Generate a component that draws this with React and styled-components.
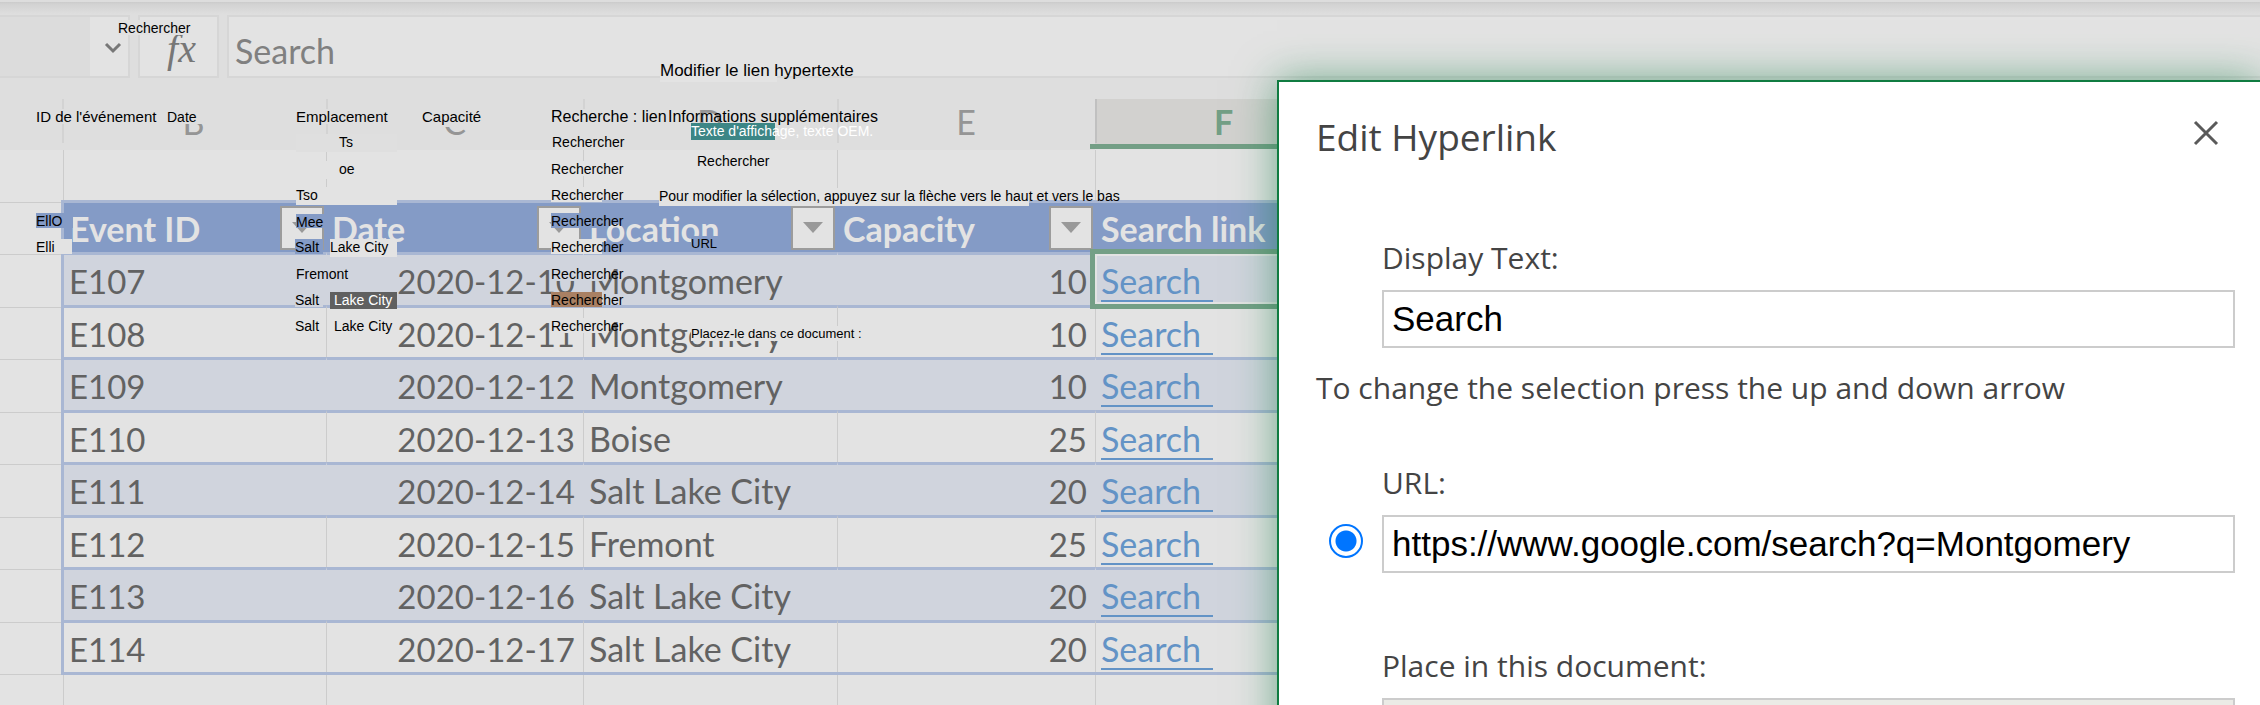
import React from "react";
import styled, { createGlobalStyle, css } from "styled-components";

const SHEET = "#e3e3e3";
const CHROME = "#dedede";
const BAND = "#d0d4dd";
const BLUE = "#849bc6";
const EDGE = "#a9b7d3";
const LINE = "#cccccc";
const GREEN = "#749f86";

const GlobalStyle = createGlobalStyle`
  * { box-sizing: border-box; }
  body { margin: 0; background: ${SHEET}; }
`;

const Page = styled.div`
  position: relative;
  height: 100vh;
  overflow: hidden;
  background: ${SHEET};
  color: #626262;
  font: 34px/40px Lato, Carlito, sans-serif;
`;

/* ---------- formula bar ---------- */

const TopStrip = styled.div`
  height: 15px;
  border-top: 2px solid #dddddd;
  background: linear-gradient(#cbcbcb, #d2d2d2 2px, #dedede 12px);
`;

const FormulaBar = styled.div`
  display: flex;
  gap: 8px;
  height: 84px;
  padding-bottom: 21px;
  background: ${CHROME};
`;

const BarBox = styled.div`
  display: flex;
  align-items: center;
  border: 2px solid #d6d6d6;
  background: ${SHEET};
`;

const NameBox = styled(BarBox)`
  width: 130px;
  border-left: 0;
`;

const NameValue = styled.div`
  width: 90px;
  align-self: stretch;
  background: #dcdcdc;
`;

const NameToggle = styled.button`
  flex: 1;
  display: flex;
  justify-content: flex-end;
  padding: 2px 6px 0 0;
  border: 0;
  background: none;
`;

const FxButton = styled.button`
  width: 81px;
  padding: 4px 0 0 6px;
  border: 2px solid #d6d6d6;
  background: ${SHEET};
  color: #777777;
  font: italic 40px/40px "Liberation Serif", serif;
`;

const FormulaInput = styled.input`
  flex: 1;
  min-width: 0;
  padding: 8px 6px 0;
  border: 2px solid #d6d6d6;
  border-right: 0;
  background: ${SHEET};
  color: #808080;
  font: inherit;
`;

/* ---------- grid ---------- */

const Grid = styled.table`
  width: 100%;
  table-layout: fixed;
  border-collapse: separate;
  border-spacing: 0;
`;

const Col = styled.col`
  width: ${(p) => p.$w}px;
`;

const Letter = styled.th`
  position: relative;
  height: 51px;
  padding: 0 0 ${(p) => (p.$active ? 4 : 6)}px;
  background: ${(p) => (p.$active ? "#d2d1cf" : CHROME)};
  color: ${(p) => (p.$active ? GREEN : "#959595")};
  font-weight: ${(p) => (p.$active ? 700 : 400)};
  background-image: linear-gradient(
    ${(p) => (p.$active ? "#c0c0c0" : "#d3d3d3")} 44px,
    transparent 44px
  );
  background-size: 2px 100%;
  background-position: ${(p) => (p.$first ? 1 : 0)}px 0;
  background-repeat: no-repeat;
  ${(p) =>
    p.$active &&
    css`
      border-bottom: 2px solid ${SHEET};
      &::after {
        content: "";
        position: absolute;
        left: -5px;
        right: 0;
        bottom: -1px;
        height: 5px;
        background: ${GREEN};
      }
    `}
`;

const Corner = styled.th`
  padding: 0;
  background: ${CHROME};
`;

const Row = styled.tr`
  height: ${(p) => p.$h}px;
`;

const Gutter = styled.td`
  padding: 0;
  background: linear-gradient(${LINE}, ${LINE}) 0 2px / 100% 1px no-repeat;
`;

const Blank = styled.td`
  padding: 0;
  background: linear-gradient(${LINE}, ${LINE}) ${(p) => (p.$first ? 2 : 0)}px 0 /
    1px 100% no-repeat;
  border-top: ${(p) => (p.$edge ? `3px solid ${EDGE}` : 0)};
`;

const HeadCell = styled.th`
  padding: 0 2px 0 6px;
  border-top: 3px solid ${EDGE};
  border-left: ${(p) => (p.$first ? `3px solid ${EDGE}` : 0)};
  background: ${BLUE};
  color: ${SHEET};
  font-weight: 700;
  text-align: left;
`;

const HeadInner = styled.div`
  display: flex;
  align-items: center;
  justify-content: space-between;
  height: 46px;
  white-space: nowrap;
`;

const HeadText = styled.span`
  padding-top: 3px;
`;

const FilterButton = styled.button`
  display: flex;
  align-items: center;
  justify-content: center;
  width: 44px;
  height: 44px;
  padding: 0;
  border: 2px solid #9c9c9c;
  background: ${SHEET};
`;

const Cell = styled.td`
  position: ${(p) => (p.$active ? "relative" : "static")};
  padding: 6px 8px 0 5px;
  border-top: 3px solid ${EDGE};
  border-left: 1px solid ${(p) => (p.$band ? BAND : LINE)};
  background: ${(p) => (p.$band ? BAND : SHEET)};
  text-align: ${(p) => (p.$right ? "right" : "left")};
  vertical-align: top;
  font-size: ${(p) => (p.$digits ? 33 : 34)}px;
  line-height: 40px;
  white-space: nowrap;
  ${(p) =>
    p.$first &&
    css`
      border-left: 3px solid ${EDGE};
    `}
`;

const CellLink = styled.a`
  display: inline-block;
  height: 41px;
  padding-right: 12px;
  border-bottom: 2px solid #6393c6;
  color: #6393c6;
  text-decoration: none;
  vertical-align: top;
`;

const Selection = styled.span`
  position: absolute;
  top: -6px;
  bottom: -4px;
  left: -6px;
  right: 0;
  border: 5px solid ${GREEN};
  box-shadow: inset 0 0 0 2px ${SHEET};
  pointer-events: none;
`;

/* ---------- floating translated labels ---------- */

const Tag = styled.span`
  position: absolute;
  left: ${(p) => p.$x}px;
  top: ${(p) => p.$y}px;
  width: ${(p) => p.$w}px;
  height: ${(p) => p.$h}px;
  padding-left: ${(p) => p.$pad || 0}px;
  background: ${(p) => p.$bg};
  color: ${(p) => p.$color || "#000000"};
  font: ${(p) => p.$size || 14}px/16px "Liberation Sans", sans-serif;
  white-space: nowrap;
`;

/* ---------- dialog ---------- */

const Dialog = styled.section`
  position: absolute;
  top: 80px;
  left: 1277px;
  right: 0;
  min-height: 100vh;
  padding: 29px 25px 0 37px;
  border: solid #107c41;
  border-width: 2px 0 0 2px;
  background: #ffffff;
  box-shadow: 0 0 40px rgba(16, 124, 65, 0.55);
  color: #444444;
  font: 30px/40px "Open Sans", "Noto Sans", sans-serif;
`;

const DialogHeader = styled.header`
  display: flex;
  justify-content: space-between;
  align-items: flex-start;
  margin-bottom: 75px;
`;

const Title = styled.h1`
  margin: 0;
  font-size: 37px;
  font-weight: 400;
  line-height: 52px;
`;

const CloseButton = styled.button`
  display: flex;
  padding: 8px 15px;
  border: 0;
  background: none;
`;

const Field = styled.div`
  display: grid;
  grid-template-columns: 66px 1fr;
  row-gap: 12px;
  align-items: center;
  margin-bottom: ${(p) => p.$after}px;
`;

const FieldLabel = styled.label`
  grid-column: 2;
`;

const TextInput = styled.input`
  grid-column: 2;
  width: 100%;
  height: 58px;
  padding: 0 8px;
  border: 2px solid #cccccc;
  background: #ffffff;
  color: #000000;
  font: 35px "Liberation Sans", sans-serif;
`;

const PlaceList = styled.select`
  grid-column: 2;
  width: 100%;
  height: 200px;
  border: 2px solid #cccccc;
  border-radius: 0;
  background: #ebebe6;
`;

const Radio = styled.input`
  appearance: none;
  width: 34px;
  height: 34px;
  margin: 0 0 6px 13px;
  border: 2px solid #0075ff;
  border-radius: 50%;
  background: radial-gradient(circle, #0075ff 10px, #ffffff 11px);
`;

const Hint = styled.p`
  margin: 0 0 55px;
  white-space: nowrap;
`;

const EVENTS = [
  ["E107", "2020-12-10", "Montgomery", 10],
  ["E108", "2020-12-11", "Montgomery", 10],
  ["E109", "2020-12-12", "Montgomery", 10],
  ["E110", "2020-12-13", "Boise", 25],
  ["E111", "2020-12-14", "Salt Lake City", 20],
  ["E112", "2020-12-15", "Fremont", 25],
  ["E113", "2020-12-16", "Salt Lake City", 20],
  ["E114", "2020-12-17", "Salt Lake City", 20],
];

const HEADS = ["Event ID", "Date", "Location", "Capacity", "Search link"];

const TAGS = [
  { t: "Rechercher", x: 118, y: 20, w: 72, h: 15, bg: "#e1e1e1" },
  { t: "ID de l'événement", x: 36, y: 109, w: 118, h: 15, bg: CHROME, size: 15 },
  { t: "Date", x: 167, y: 109, w: 40, h: 15, bg: CHROME, size: 14 },
  { t: "Emplacement", x: 296, y: 109, w: 91, h: 15, bg: CHROME, size: 15 },
  { t: "Capacité", x: 422, y: 109, w: 58, h: 18, bg: CHROME, size: 15 },
  { t: "Ts", x: 296, y: 134, w: 101, h: 18, bg: "#dfdfdf", pad: 43 },
  { t: "oe", x: 296, y: 161, w: 101, h: 18, bg: SHEET, pad: 43 },
  { t: "Tso", x: 296, y: 187, w: 101, h: 18, bg: SHEET },
  { t: "Mee", x: 296, y: 214, w: 28, h: 14, bg: BLUE },
  { t: "Salt", x: 295, y: 239, w: 28, h: 15, bg: BLUE },
  { t: "Lake City", x: 330, y: 239, w: 67, h: 18, bg: SHEET },
  { t: "Fremont", x: 296, y: 266, w: 48, h: 15, bg: BAND },
  { t: "Salt", x: 295, y: 292, w: 28, h: 15, bg: BAND },
  { t: "Lake City", x: 330, y: 292, w: 67, h: 17, bg: "#606060", color: "#ffffff", pad: 4 },
  { t: "Salt", x: 295, y: 318, w: 28, h: 15, bg: SHEET },
  { t: "Lake City", x: 330, y: 318, w: 67, h: 15, bg: SHEET, pad: 4 },
  { t: "EllO", x: 36, y: 213, w: 37, h: 15, bg: BLUE },
  { t: "Elli", x: 36, y: 239, w: 36, h: 15, bg: SHEET },
  { t: "Rechercher", x: 552, y: 134, w: 51, h: 15, bg: CHROME },
  { t: "Rechercher", x: 551, y: 161, w: 51, h: 15, bg: SHEET },
  { t: "Rechercher", x: 551, y: 187, w: 51, h: 15, bg: SHEET },
  { t: "Rechercher", x: 551, y: 213, w: 51, h: 15, bg: BLUE },
  { t: "Rechercher", x: 551, y: 239, w: 51, h: 15, bg: SHEET },
  { t: "Rechercher", x: 551, y: 266, w: 51, h: 15, bg: BAND },
  { t: "Rechercher", x: 551, y: 292, w: 51, h: 15, bg: "#a98063" },
  { t: "Rechercher", x: 551, y: 318, w: 51, h: 15, bg: SHEET },
  { t: "Modifier le lien hypertexte", x: 660, y: 63, w: 117, h: 19, bg: SHEET, size: 17 },
  { t: "Recherche : lien", x: 551, y: 109, w: 113, h: 25, bg: CHROME, size: 16 },
  { t: "Texte d'affichage, texte OEM.", x: 691, y: 123, w: 84, h: 17, bg: "#3c8686", color: "#ffffff" },
  { t: "Informations supplémentaires", x: 668, y: 109, w: 204, h: 15, bg: "transparent", size: 16 },
  { t: "Rechercher", x: 697, y: 153, w: 73, h: 15, bg: SHEET },
  { t: "Pour modifier la sélection, appuyez sur la flèche vers le haut et vers le bas", x: 659, y: 188, w: 370, h: 18, bg: SHEET },
  { t: "URL", x: 691, y: 236, w: 29, h: 15, bg: BLUE, size: 13 },
  { t: "Placez-le dans ce document :", x: 691, y: 326, w: 149, h: 15, bg: SHEET, size: 13 },
];

const letters = ["B", "C", "D", "E", "F", "G"];

function BlankRow({ h, edge }) {
  return (
    <Row $h={h}>
      {edge ? <Gutter /> : <td />}
      {letters.map((l, i) => (
        <Blank key={l} $first={i === 0} $edge={edge} />
      ))}
    </Row>
  );
}

function Sheet() {
  return (
    <Grid>
      <colgroup>
        {[61, 265, 257, 254, 258, 257].map((w, i) => (
          <Col key={i} $w={w} />
        ))}
        <col />
      </colgroup>
      <thead>
        <tr>
          <Corner />
          {letters.map((l, i) => (
            <Letter key={l} scope="col" $first={i === 0} $active={l === "F"}>
              {l === "G" ? null : l}
            </Letter>
          ))}
        </tr>
      </thead>
      <tbody>
        <BlankRow h={50} />
        <Row $h={52}>
          <Gutter />
          {HEADS.map((h, i) => (
            <HeadCell key={h} scope="col" $first={i === 0}>
              <HeadInner>
                <HeadText>{h}</HeadText>
                <FilterButton aria-label={`Filter ${h}`}>
                  <svg width="20" height="11" viewBox="0 0 20 11" aria-hidden="true">
                    <path d="M0 0H20L10 11Z" fill="#999999" />
                  </svg>
                </FilterButton>
              </HeadInner>
            </HeadCell>
          ))}
          <Blank />
        </Row>
        {EVENTS.map(([id, date, place, cap], i) => {
          const band = i % 2 === 0;
          return (
            <Row key={id} $h={band ? 53 : 52}>
              <Gutter />
              <Cell $band={band} $first $digits>{id}</Cell>
              <Cell $band={band} $right $digits>{date}</Cell>
              <Cell $band={band}>{place}</Cell>
              <Cell $band={band} $right $digits>{cap}</Cell>
              <Cell $band={band} $active={i === 0}>
                <CellLink href="#search">Search</CellLink>
                {i === 0 && <Selection />}
              </Cell>
              <Blank />
            </Row>
          );
        })}
        <BlankRow h={53} edge />
      </tbody>
    </Grid>
  );
}

function HyperlinkDialog() {
  return (
    <Dialog role="dialog" aria-labelledby="dialog-title">
      <DialogHeader>
        <Title id="dialog-title">Edit Hyperlink</Title>
        <CloseButton aria-label="Close">
          <svg width="28" height="28" viewBox="0 0 28 28" aria-hidden="true">
            <path d="M3 3L25 25M25 3L3 25" stroke="#5a5a5a" strokeWidth="3" fill="none" />
          </svg>
        </CloseButton>
      </DialogHeader>
      <Field $after={20}>
        <FieldLabel htmlFor="display-text">Display Text:</FieldLabel>
        <TextInput id="display-text" defaultValue="Search" />
      </Field>
      <Hint>To change the selection press the up and down arrow</Hint>
      <Field $after={73}>
        <FieldLabel id="url-label" htmlFor="url">URL:</FieldLabel>
        <Radio type="radio" name="target" defaultChecked aria-labelledby="url-label" />
        <TextInput id="url" defaultValue="https://www.google.com/search?q=Montgomery" />
      </Field>
      <Field $after={0}>
        <FieldLabel htmlFor="place">Place in this document:</FieldLabel>
        <PlaceList id="place" size={5} />
      </Field>
    </Dialog>
  );
}

export default function App() {
  return (
    <Page>
      <GlobalStyle />
      <TopStrip />
      <FormulaBar>
        <NameBox>
          <NameValue />
          <NameToggle aria-label="Name box list">
            <svg width="18" height="12" viewBox="0 0 18 12" aria-hidden="true">
              <path d="M2 2L9 9L16 2" stroke="#777777" strokeWidth="3" fill="none" />
            </svg>
          </NameToggle>
        </NameBox>
        <FxButton>fx</FxButton>
        <FormulaInput aria-label="Formula" defaultValue="Search" />
      </FormulaBar>
      <Sheet />
      {TAGS.map((g, i) => (
        <Tag key={i} $x={g.x} $y={g.y} $w={g.w} $h={g.h} $bg={g.bg} $size={g.size} $color={g.color} $pad={g.pad}>
          {g.t}
        </Tag>
      ))}
      <HyperlinkDialog />
    </Page>
  );
}
